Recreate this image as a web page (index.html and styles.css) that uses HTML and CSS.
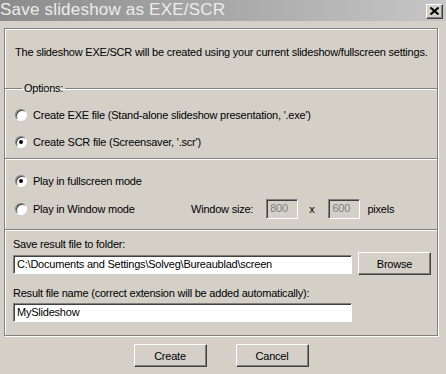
FILE: index.html
```html
<!DOCTYPE html>
<html lang="en">
<head>
    <meta charset="UTF-8">
    <title>Save slideshow as EXE/SCR</title>
    <link rel="stylesheet" href="styles.css">
</head>
<body>
    <div class="titlebar">
        <span class="title">Save slideshow as EXE/SCR</span>
        <span class="close" role="button" aria-label="Close">
            <svg width="9" height="8" viewBox="0 0 9 8"><path d="M0.5 0.5L8.5 7.5M8.5 0.5L0.5 7.5" stroke="#000" stroke-width="2"/></svg>
        </span>
    </div>

    <div class="dialog">
        <div class="frame">
            <div class="intro">The slideshow EXE/SCR will be created using your current slideshow/fullscreen settings.</div>

            <fieldset class="options">
                <legend>Options:</legend>
                <label class="radio"><span class="dot"></span>Create EXE file (Stand-alone slideshow presentation, '.exe')</label>
                <label class="radio"><span class="dot on"></span>Create SCR file (Screensaver, '.scr')</label>
            </fieldset>

            <div class="section mode">
                <label class="radio"><span class="dot on"></span>Play in fullscreen mode</label>
                <div class="row">
                    <label class="radio grow"><span class="dot"></span>Play in Window mode</label>
                    <span class="size-label">Window size:</span>
                    <span class="field small disabled">800</span>
                    <span class="times">x</span>
                    <span class="field small disabled">600</span>
                    <span class="unit">pixels</span>
                </div>
            </div>

            <div class="section output">
                <div class="caption">Save result file to folder:</div>
                <div class="row">
                    <span class="field wide">C:\Documents and Settings\Solveg\Bureaublad\screen</span>
                    <button class="btn browse" type="button">Browse</button>
                </div>
                <div class="caption second">Result file name (correct extension will be added automatically):</div>
                <span class="field wide">MySlideshow</span>
            </div>
        </div>

        <div class="actions">
            <button class="btn" type="button">Create</button>
            <button class="btn" type="button">Cancel</button>
        </div>
    </div>
</body>
</html>
```

FILE: styles.css
```css
body {
    margin: 0;
    width: 446px;
    height: 374px;
    overflow: hidden;
    background: #d4d0c8;
    font-family: 'Liberation Sans', Arial, sans-serif;
    font-size: 11px;
    letter-spacing: -0.22px;
    color: #000;
}
.titlebar {
    height: 21px;
    display: grid;
    grid-template-columns: 1fr 17px;
    align-items: center;
    padding-right: 3px;
    background: linear-gradient(to right, #8c8c8c, #a8a8a8 50%, #c6c6c6);
}
.title {
    font-size: 17px;
    color: #ececec;
    letter-spacing: 0.2px;
    margin-top: -1px;
}
.close {
    width: 17px;
    height: 15px;
    margin-top: 1px;
    box-sizing: border-box;
    display: flex;
    align-items: center;
    justify-content: center;
    background: #d4d0c8;
    border: 1px solid;
    border-color: #fff #404040 #404040 #fff;
    box-shadow: inset -1px -1px #808080;
}
.dialog {
    padding: 7px 8px 0 4px;
}
.frame {
    border: 1px solid #808080;
    box-shadow: inset 1px 1px #fff, 1px 1px #fff;
    height: 308px;
    box-sizing: border-box;
}
.intro {
    height: 53px;
    padding: 17px 0 0 10px;
    box-sizing: border-box;
}
.options {
    margin: 0;
    padding: 7px 0 0 10px;
    height: 76px;
    box-sizing: border-box;
    border: 0;
    border-top: 1px solid #808080;
    box-shadow: inset 0 1px #fff;
}
.options legend {
    padding: 0 2px;
    margin-left: 7px;
}
.section {
    border-top: 1px solid #808080;
    box-shadow: inset 0 1px #fff;
    padding-left: 10px;
}
.mode {
    height: 71px;
    box-sizing: border-box;
    padding-top: 8px;
}
.radio {
    display: flex;
    align-items: center;
    height: 27px;
}
.mode .radio {
    height: 28px;
}
.dot {
    width: 12px;
    height: 12px;
    border-radius: 50%;
    box-sizing: border-box;
    margin-right: 6px;
    background: #fff;
    border: 1px solid;
    border-color: #808080 #fff #fff #808080;
    box-shadow: inset 1px 1px #404040;
    position: relative;
}
.dot.on::after {
    content: "";
    position: absolute;
    left: 3px;
    top: 3px;
    width: 4px;
    height: 4px;
    border-radius: 50%;
    background: #000;
}
.row {
    display: flex;
    align-items: center;
}
.grow {
    width: 176px;
}
.field {
    display: inline-block;
    box-sizing: border-box;
    border: 1px solid;
    border-color: #808080 #fff #fff #808080;
    box-shadow: inset 1px 1px #404040;
    background: #fff;
    padding: 2px 0 0 3px;
    white-space: nowrap;
}
.field.small {
    width: 32px;
    height: 20px;
}
.field.disabled {
    background: #d4d0c8;
    color: #808080;
}
.size-label {
    margin-right: 13px;
}
.times {
    margin: 0 14px 0 11px;
}
.unit {
    margin-left: 7px;
}
.output {
    padding: 8px 0 0 8px;
}
.caption {
    height: 13px;
}
.caption.second {
    margin-top: 12px;
    height: 16px;
}
.field.wide {
    width: 339px;
    height: 19px;
}
.output .row {
    margin-top: 3px;
    gap: 6px;
}
.btn {
    font-family: inherit;
    font-size: 11px;
    letter-spacing: inherit;
    width: 73px;
    height: 23px;
    padding: 0;
    background: #d4d0c8;
    border: 1px solid;
    border-color: #fff #404040 #404040 #fff;
    box-shadow: inset -1px -1px #808080;
    color: #000;
}
.browse {
    margin-top: -2px;
}
.actions {
    display: flex;
    justify-content: center;
    gap: 29px;
    margin-top: 8px;
}
```
